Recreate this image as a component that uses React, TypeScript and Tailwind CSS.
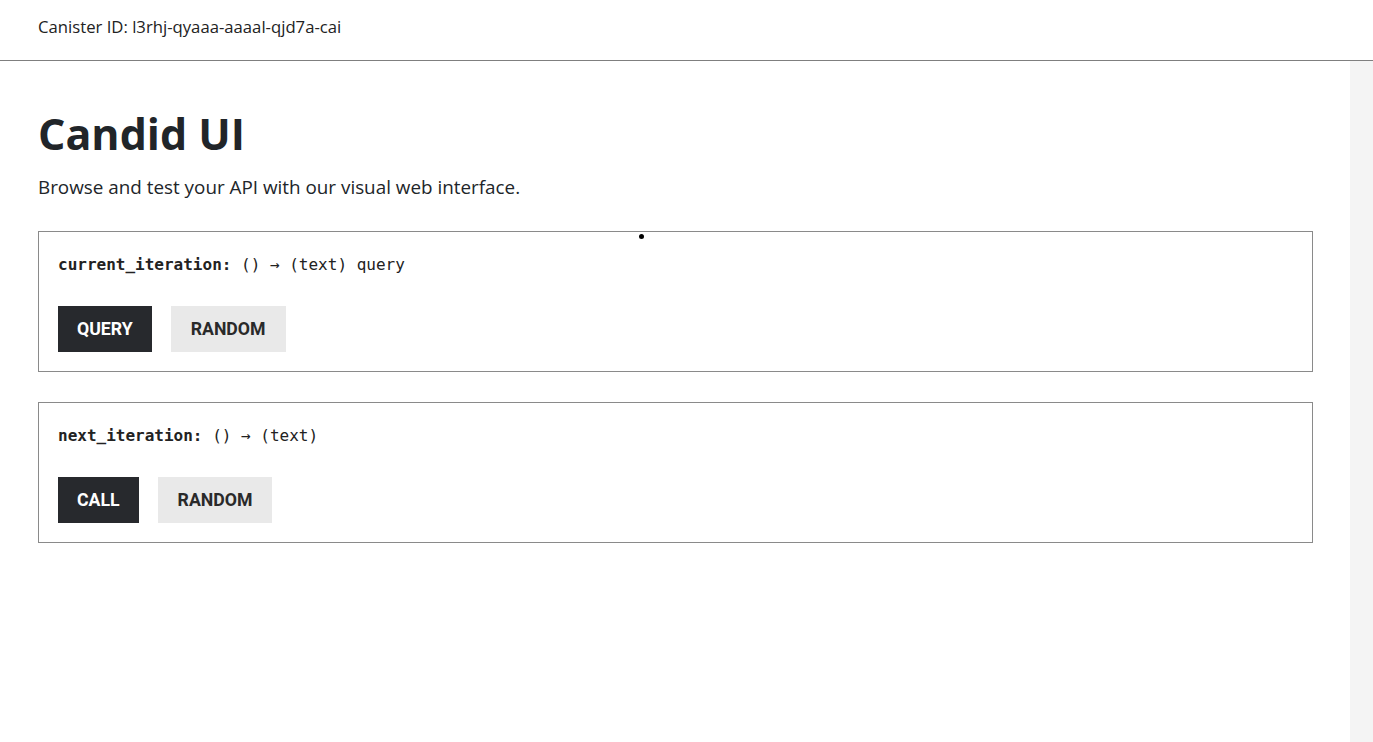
import React from 'react';

const sans = { fontFamily: '"Open Sans", "Noto Sans", sans-serif' };

const methods = [
  { name: 'current_iteration', sig: '() → (text) query', action: 'QUERY' },
  { name: 'next_iteration', sig: '() → (text)', action: 'CALL' },
];

const MethodCard = ({ name, sig, action }: { name: string; sig: string; action: string }) => (
  <div className="border border-[#8a8a8a] px-[19px] pt-[22px] pb-[19px]">
    <div className="font-['DejaVu_Sans_Mono',monospace] text-[16px] leading-[22px] text-[#222]">
      <span className="font-bold">{name}:</span> {sig}
    </div>
    <div className="mt-[30px] flex gap-[19px]">
      <button className="h-[46px] px-[19px] bg-[#27292d] text-white font-['Roboto',sans-serif] font-bold text-[17.7px]">
        {action}
      </button>
      <button className="h-[46px] px-[20px] bg-[#e9e9e9] text-[#2a2a2a] font-['Roboto',sans-serif] font-bold text-[17.7px]">
        RANDOM
      </button>
    </div>
  </div>
);

export default function App() {
  return (
    <div className="h-[742px] w-[1373px] bg-white text-[#212529] flex flex-col overflow-hidden" style={sans}>
      <header className="h-[61px] shrink-0 border-b border-[#7f7f7f] px-[38px] flex items-center pb-[6px]">
        <span className="text-[16.7px] text-[#222]">Canister ID: l3rhj-qyaaa-aaaal-qjd7a-cai</span>
      </header>
      <div className="flex flex-1">
        <main className="relative flex-1 pl-[38px] pr-[37px] pt-[45px]">
          <h1 className="text-[43px] leading-[56px] font-bold text-[#212529]">Candid UI</h1>
          <p className="mt-[12px] text-[18.85px] leading-[27px] text-[#212529]">
            Browse and test your API with our visual web interface.
          </p>
          <div className="mt-[30px] flex flex-col gap-[30px]">
            {methods.map((m) => (
              <MethodCard key={m.name} {...m} />
            ))}
          </div>
          <span className="absolute left-[639px] top-[173px] h-[5px] w-[5px] rounded-full bg-black" />
        </main>
        <aside className="w-[23px] shrink-0 bg-[#f4f4f4]" />
      </div>
    </div>
  );
}
